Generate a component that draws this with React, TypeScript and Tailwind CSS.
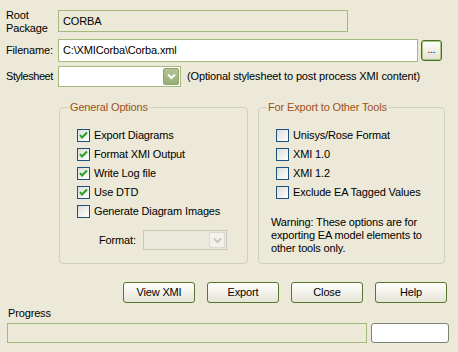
import React from "react";

const Check = ({ checked }: { checked?: boolean }) => (
  <div className="w-[13px] h-[13px] shrink-0 border border-[#1c5180] bg-gradient-to-br from-[#dcdcd7] to-white flex items-center justify-center">
    {checked && (
      <svg width="9" height="9" viewBox="0 0 9 9">
        <path d="M1 4 L3 6.5 L8 1.5" stroke="#21a121" strokeWidth="2" fill="none" />
      </svg>
    )}
  </div>
);

const Chevron = ({ color }: { color: string }) => (
  <svg width="9" height="7" viewBox="0 0 9 7">
    <path d="M1 1.5 L4.5 5 L8 1.5" stroke={color} strokeWidth="2" fill="none" />
  </svg>
);

const Option = ({ label, checked }: { label: string; checked?: boolean }) => (
  <div className="flex items-center gap-[4px] h-[13px]">
    <Check checked={checked} />
    <span className="leading-[13px]">{label}</span>
  </div>
);

const XpButton = ({ label }: { label: string }) => (
  <button className="w-[72px] h-[21px] rounded-[3px] border border-[#56752f] bg-gradient-to-b from-white to-[#e6e4d6] text-[11px] leading-none">
    {label}
  </button>
);

export default function App() {
  return (
    <div className="w-[458px] h-[352px] bg-[#ece9d8] text-black text-[11px] tracking-[-0.15px] font-['Liberation_Sans',Arial,sans-serif] pt-[10px] overflow-hidden">
      {/* Root package */}
      <div className="flex items-start h-[22px]">
        <div className="w-[58px] pl-[6px] leading-[13px] mt-[-1px]">
          Root
          <br />
          Package
        </div>
        <div className="w-[290px] h-[22px] border border-[#a5b97f] flex items-center pl-[4px]">CORBA</div>
      </div>

      {/* Filename */}
      <div className="flex items-center mt-[7px]">
        <div className="w-[58px] pl-[6px]">Filename:</div>
        <div className="w-[360px] h-[23px] border border-[#a5b97f] bg-white flex items-center pl-[4px]">
          C:\XMICorba\Corba.xml
        </div>
        <button className="ml-[3px] w-[21px] h-[21px] rounded-[3px] border border-[#4c6b25] bg-gradient-to-b from-white to-[#e2e0d2] shadow-[inset_0_0_0_1px_#a9c67e] text-[10px] leading-none pb-[2px]">
          ...
        </button>
      </div>

      {/* Stylesheet */}
      <div className="flex items-center mt-[4px]">
        <div className="w-[58px] pl-[6px] tracking-[-0.45px]">Stylesheet</div>
        <div className="w-[123px] h-[21px] border border-[#a5b97f] bg-white flex items-center justify-end pr-[1px]">
          <div className="w-[16px] h-[17px] rounded-[2px] bg-gradient-to-b from-[#b3c493] to-[#98ad74] border border-[#8fa36b] flex items-center justify-center">
            <Chevron color="#ffffff" />
          </div>
        </div>
        <span className="ml-[6px]">(Optional stylesheet to post process XMI content)</span>
      </div>

      {/* Groups */}
      <div className="flex pl-[59px] gap-[10px] mt-[14px]">
        <fieldset className="w-[189px] h-[163px] border border-[#d0d0bf] rounded-[4px] pl-[17px]">
          <legend className="ml-[-8px] px-[1px] text-[#a0501c] leading-[13px]">General Options</legend>
          <div className="flex flex-col gap-[6px] mt-[15px]">
            <Option label="Export Diagrams" checked />
            <Option label="Format XMI Output" checked />
            <Option label="Write Log file" checked />
            <Option label="Use DTD" checked />
            <Option label="Generate Diagram Images" />
          </div>
          <div className="flex items-center mt-[12px] pl-[22px]">
            <span className="w-[44px]">Format:</span>
            <div className="w-[84px] h-[20px] border border-[#c9c7ba] bg-[#ebe9db] flex items-center justify-end pr-[1px]">
              <div className="w-[16px] h-[16px] rounded-[2px] bg-[#f2f1ea] border border-[#dcdad0] flex items-center justify-center">
                <Chevron color="#c9c7bc" />
              </div>
            </div>
          </div>
        </fieldset>

        <fieldset className="w-[187px] h-[163px] border border-[#d0d0bf] rounded-[4px] pl-[17px]">
          <legend className="ml-[-9px] px-[1px] text-[#a0501c] leading-[13px]">For Export to Other Tools</legend>
          <div className="flex flex-col gap-[6px] mt-[15px]">
            <Option label="Unisys/Rose Format" />
            <Option label="XMI 1.0" />
            <Option label="XMI 1.2" />
            <Option label="Exclude EA Tagged Values" />
          </div>
          <p className="ml-[-5px] mt-[17px] leading-[13px] pr-[8px]">
            Warning: These options are for exporting EA model elements to other tools only.
          </p>
        </fieldset>
      </div>

      {/* Buttons */}
      <div className="flex justify-end gap-[12px] pr-[11px] mt-[18px]">
        <XpButton label="View XMI" />
        <XpButton label="Export" />
        <XpButton label="Close" />
        <XpButton label="Help" />
      </div>

      {/* Progress */}
      <div className="pl-[8px] mt-[3px] leading-[14px]">Progress</div>
      <div className="flex items-center pl-[7px] mt-[3px] gap-[4px]">
        <div className="w-[360px] h-[20px] border border-[#a5b97f]" />
        <div className="w-[78px] h-[20px] bg-white border border-[#7a8474] rounded-[3px]" />
      </div>
    </div>
  );
}
